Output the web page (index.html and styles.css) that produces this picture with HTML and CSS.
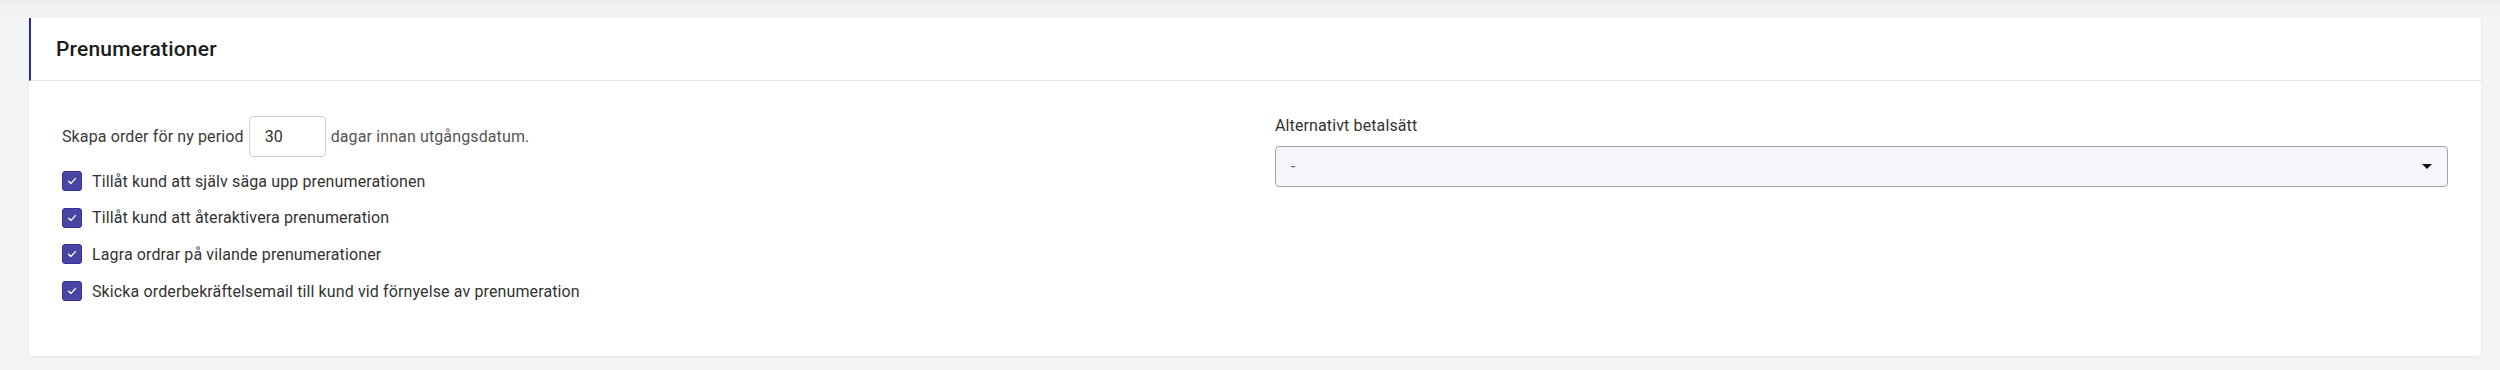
FILE: index.html
```html
<!DOCTYPE html>
<html lang="sv">
<head>
    <meta charset="UTF-8">
    <title>Prenumerationer</title>
    <link rel="stylesheet" href="styles.css">
</head>
<body>

<!--Prenumerationer kort-->
<div class="card">
    <div class="card-header">
        <h2>Prenumerationer</h2>
    </div>

    <div class="card-body">
        <div class="col">
            <div class="period-row">
                <span>Skapa order för ny period</span>
                <input type="text" class="days" value="30">
                <span class="muted">dagar innan utgångsdatum.</span>
            </div>

            <div class="checks">
                <label class="check">
                    <span class="box">
                        <svg width="12" height="12" viewBox="0 0 12 12"><path d="M2.6 6.2 L5 8.4 L9.4 3.6" fill="none" stroke="#fff" stroke-width="1.4" stroke-linecap="round" stroke-linejoin="round"/></svg>
                    </span>
                    Tillåt kund att själv säga upp prenumerationen
                </label>
                <label class="check">
                    <span class="box">
                        <svg width="12" height="12" viewBox="0 0 12 12"><path d="M2.6 6.2 L5 8.4 L9.4 3.6" fill="none" stroke="#fff" stroke-width="1.4" stroke-linecap="round" stroke-linejoin="round"/></svg>
                    </span>
                    Tillåt kund att återaktivera prenumeration
                </label>
                <label class="check">
                    <span class="box">
                        <svg width="12" height="12" viewBox="0 0 12 12"><path d="M2.6 6.2 L5 8.4 L9.4 3.6" fill="none" stroke="#fff" stroke-width="1.4" stroke-linecap="round" stroke-linejoin="round"/></svg>
                    </span>
                    Lagra ordrar på vilande prenumerationer
                </label>
                <label class="check">
                    <span class="box">
                        <svg width="12" height="12" viewBox="0 0 12 12"><path d="M2.6 6.2 L5 8.4 L9.4 3.6" fill="none" stroke="#fff" stroke-width="1.4" stroke-linecap="round" stroke-linejoin="round"/></svg>
                    </span>
                    Skicka orderbekräftelsemail till kund vid förnyelse av prenumeration
                </label>
            </div>
        </div>

        <div class="col">
            <div class="field-label">Alternativt betalsätt</div>
            <div class="select">
                <span>-</span>
                <svg width="10" height="5" viewBox="0 0 10 5"><path d="M0 0 H10 L5 5 Z" fill="#111"/></svg>
            </div>
        </div>
    </div>
</div>

</body>
</html>
```

FILE: styles.css
```css
body {
    margin: 0;
    padding: 18px 19px 0 29px;
    font-family: Roboto, "Liberation Sans", Arial, sans-serif;
    background: linear-gradient(#eceef0, #f3f4f6 18px) #f3f4f6;
    height: 370px;
    box-sizing: border-box;
}
.card {
    background-color: white;
    border-radius: 4px;
    box-shadow: 0 1px 4px rgba(0, 0, 0, 0.06);
}
.card-header {
    height: 62px;
    display: flex;
    align-items: center;
    border-left: 2px solid #2c25a8;
    border-bottom: 1px solid #e6e6e8;
    padding-left: 25px;
}
.card-header h2 {
    margin: 0;
    font-size: 21px;
    font-weight: 500;
    letter-spacing: 0.2px;
    color: #1c1c1c;
}
.card-body {
    display: grid;
    grid-template-columns: 1fr 1fr;
    column-gap: 40px;
    padding: 35px 33px 55px 33px;
    letter-spacing: 0.12px;
}
.period-row {
    display: flex;
    align-items: center;
    gap: 5px;
    font-size: 16px;
    color: #3a3a3a;
}
.muted {
    color: #555;
}
.days {
    width: 77px;
    height: 41px;
    box-sizing: border-box;
    padding: 0 15px;
    border: 1px solid #cfcfd2;
    border-radius: 4px;
    font-family: inherit;
    font-size: 16px;
    color: #333;
}
.checks {
    display: flex;
    flex-direction: column;
    gap: 16.7px;
    margin-top: 14px;
}
.check {
    display: flex;
    align-items: center;
    gap: 10px;
    height: 20px;
    font-size: 16px;
    color: #333;
}
.box {
    width: 20px;
    height: 20px;
    box-sizing: border-box;
    border: 1px solid #362f9e;
    border-radius: 3px;
    background-color: #4a44a2;
    display: flex;
    align-items: center;
    justify-content: center;
}
.field-label {
    font-size: 16px;
    line-height: 20px;
    color: #333;
    margin-bottom: 10px;
}
.select {
    height: 41px;
    box-sizing: border-box;
    border: 1px solid #a4a4ac;
    border-radius: 4px;
    background-color: #f6f6fa;
    display: flex;
    align-items: center;
    justify-content: space-between;
    padding: 0 15px 0 15px;
    font-size: 16px;
    color: #666;
}
```
